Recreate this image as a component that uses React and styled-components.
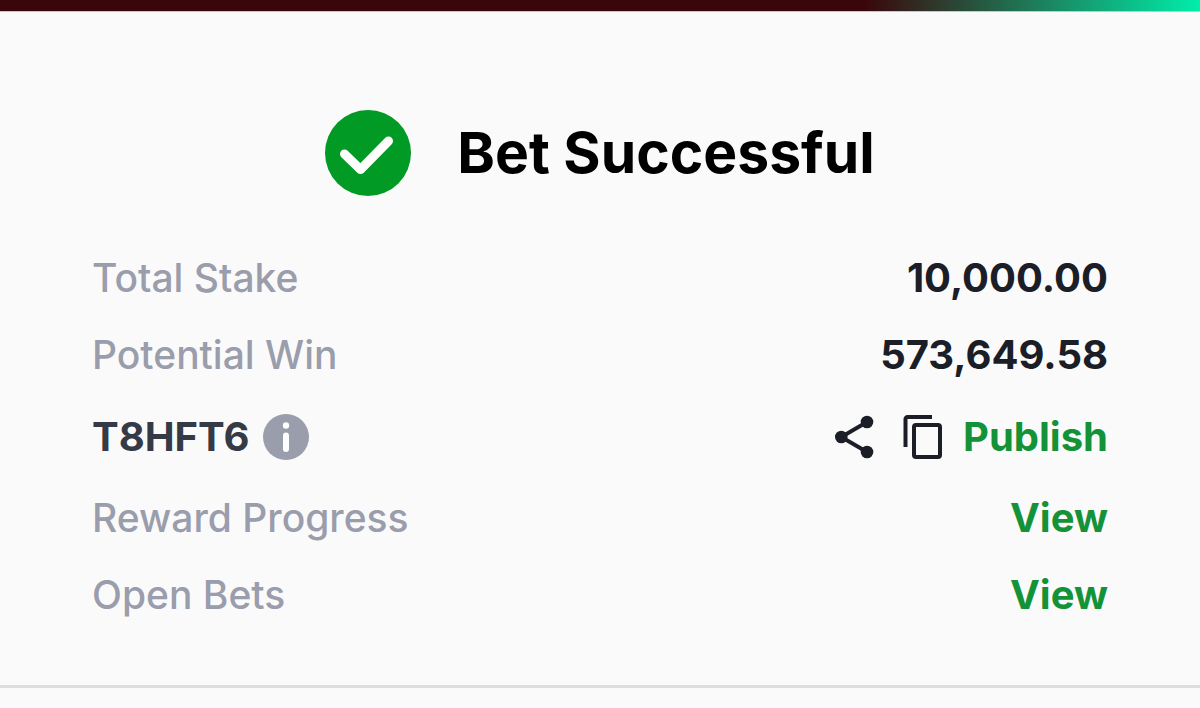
import React from "react";
import styled, { createGlobalStyle } from "styled-components";

const GlobalStyle = createGlobalStyle`
  body {
    margin: 0;
    background: #fafafb;
    font-family: Inter, "Liberation Sans", sans-serif;
  }
`;

const TopBar = styled.div`
  height: 11px;
  background: linear-gradient(90deg, #3a060a 0 72%, #265a42 82%, #00eeaa);
  border-bottom: 1px solid #c9c4c6;
`;

const Receipt = styled.main`
  padding: 98px 92px 66px;
  border-bottom: 3px solid #dddde2;
`;

const Header = styled.header`
  display: flex;
  align-items: center;
  justify-content: center;
  gap: 46px;
  margin-bottom: 58px;
`;

const Title = styled.h1`
  margin: 0;
  color: #000;
  font-size: 57px;
  font-weight: 700;
  line-height: 86px;
`;

const Rows = styled.div`
  display: flex;
  flex-direction: column;
  gap: 29px;
`;

const Row = styled.div`
  display: flex;
  align-items: center;
  justify-content: space-between;
  min-height: ${(props) => (props.$tall ? "57px" : "48px")};
  font-size: 40px;
  line-height: 48px;
`;

const Label = styled.span`
  color: #9a9dab;
  font-size: 39px;
  font-weight: 500;
`;

const Amount = styled.span`
  color: #1b1e27;
  font-weight: 700;
`;

const Code = styled.span`
  color: #353a47;
  font-weight: 700;
`;

const Group = styled.div`
  display: flex;
  align-items: center;
  gap: ${(props) => props.$gap};
`;

const IconButton = styled.button`
  display: flex;
  padding: 0;
  border: 0;
  background: none;
  color: #1b1e27;
  cursor: pointer;
`;

const ActionLink = styled.a`
  color: #149238;
  font-weight: 700;
  text-decoration: none;
`;

const CheckIcon = () => (
  <svg width="86" height="86" viewBox="0 0 86 86" aria-hidden="true">
    <circle cx="43" cy="43" r="43" fill="#009a24" />
    <path
      d="M19.500 44 35.500 59.500 63.500 31"
      fill="none"
      stroke="#fff"
      strokeWidth="9"
      strokeLinecap="round"
      strokeLinejoin="round"
    />
  </svg>
);

const InfoIcon = () => (
  <svg width="46" height="46" viewBox="0 0 46 46" aria-hidden="true">
    <circle cx="23" cy="23" r="23" fill="#9a9dab" />
    <circle cx="23" cy="11.500" r="3.200" fill="#fff" />
    <path d="M23 21.500V35" stroke="#fff" strokeWidth="6" strokeLinecap="round" />
  </svg>
);

const ShareIcon = () => (
  <svg width="40" height="46" viewBox="0 0 40 46" aria-hidden="true">
    <path d="M32 8 6.300 23 32 38" fill="none" stroke="currentColor" strokeWidth="4" />
    <circle cx="32" cy="8" r="6.300" fill="currentColor" />
    <circle cx="6.300" cy="23" r="6.300" fill="currentColor" />
    <circle cx="32" cy="38" r="6.300" fill="currentColor" />
  </svg>
);

const CopyIcon = () => (
  <svg width="40" height="46" viewBox="0 0 40 46" aria-hidden="true">
    <path
      d="M2.500 33V5a2 2 0 0 1 2-2H29"
      fill="none"
      stroke="currentColor"
      strokeWidth="4"
    />
    <rect
      x="11"
      y="11"
      width="26"
      height="32"
      rx="2"
      fill="none"
      stroke="currentColor"
      strokeWidth="4"
    />
  </svg>
);

const App = () => {
  return (
    <>
      <GlobalStyle />
      <TopBar />
      <Receipt>
        <Header>
          <CheckIcon />
          <Title>Bet Successful</Title>
        </Header>
        <Rows>
          <Row>
            <Label>Total Stake</Label>
            <Amount>10,000.00</Amount>
          </Row>
          <Row>
            <Label>Potential Win</Label>
            <Amount>573,649.58</Amount>
          </Row>
          <Row $tall>
            <Group $gap="14px">
              <Code>T8HFT6</Code>
              <IconButton type="button" aria-label="About this code">
                <InfoIcon />
              </IconButton>
            </Group>
            <Group $gap="20px">
              <Group $gap="28px">
                <IconButton type="button" aria-label="Share">
                  <ShareIcon />
                </IconButton>
                <IconButton type="button" aria-label="Copy">
                  <CopyIcon />
                </IconButton>
              </Group>
              <ActionLink href="#publish">Publish</ActionLink>
            </Group>
          </Row>
          <Row>
            <Label>Reward Progress</Label>
            <ActionLink href="#rewards">View</ActionLink>
          </Row>
          <Row>
            <Label>Open Bets</Label>
            <ActionLink href="#bets">View</ActionLink>
          </Row>
        </Rows>
      </Receipt>
    </>
  );
};

export default App;
